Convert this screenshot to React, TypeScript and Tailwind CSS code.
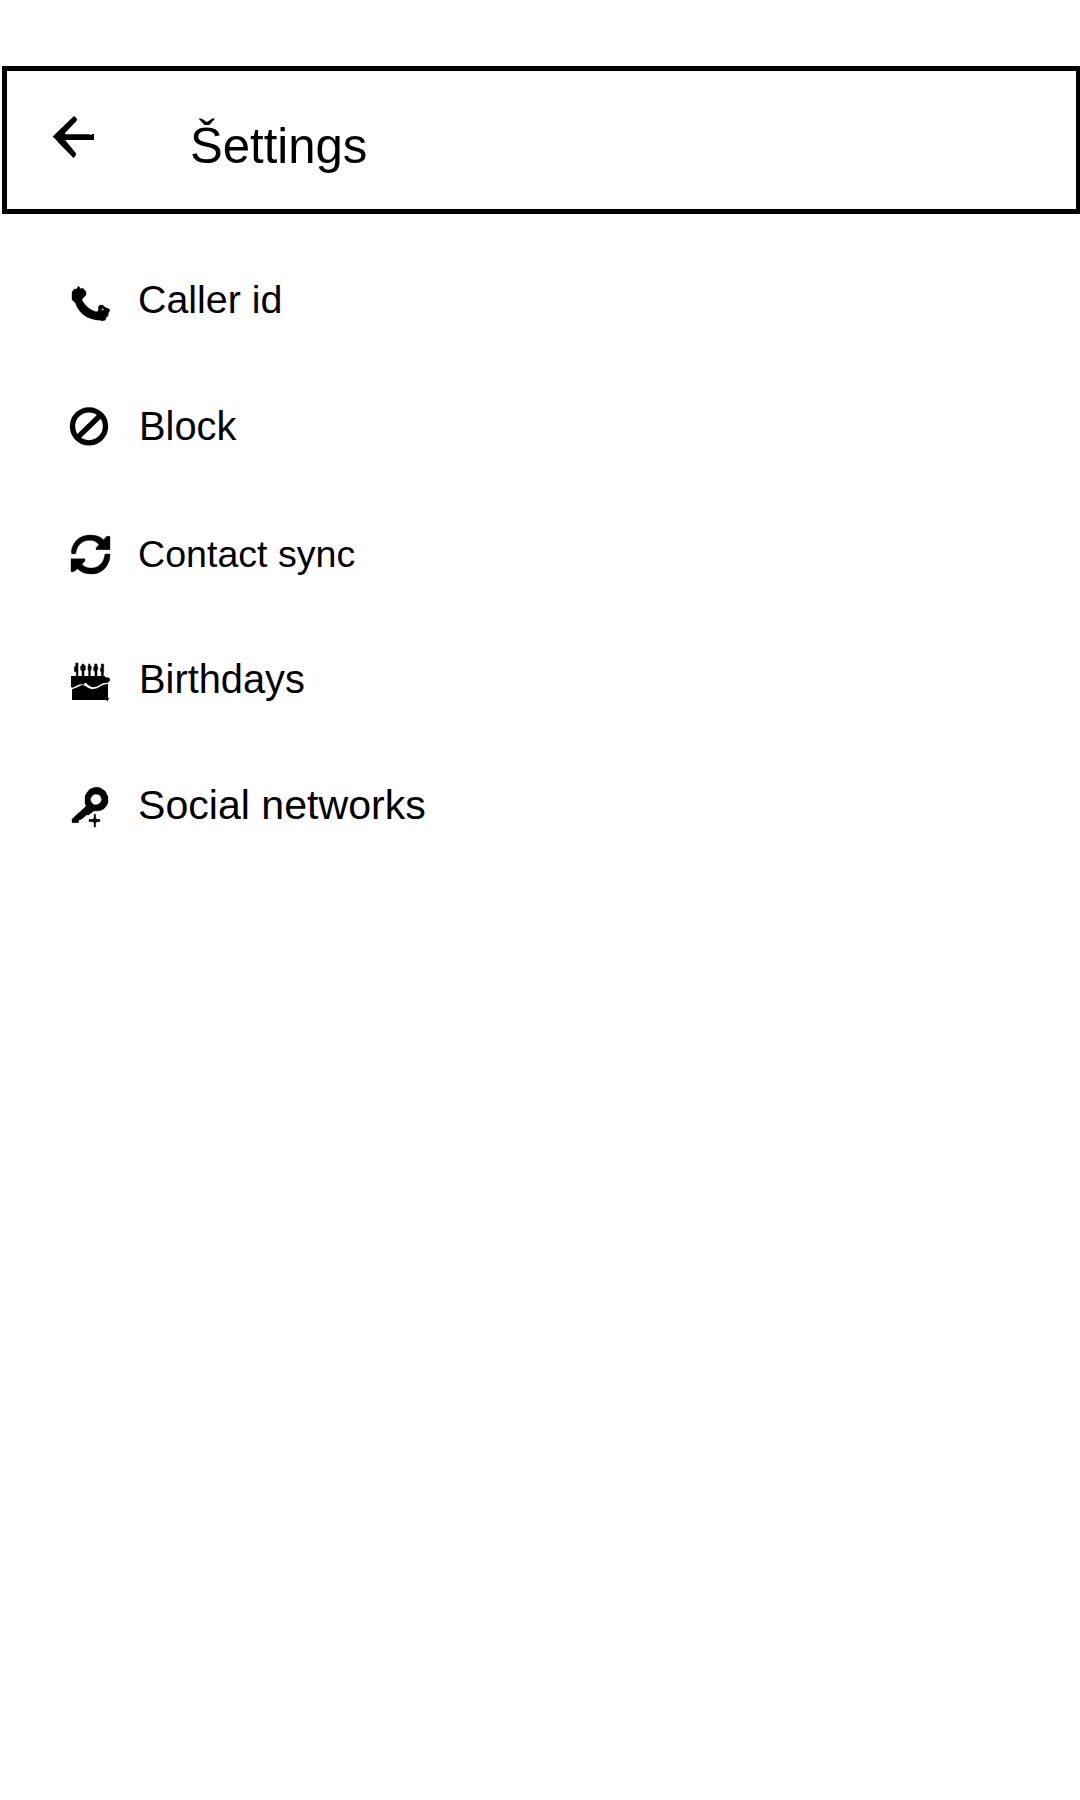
import type { ReactNode } from "react";

type Item = { label: string; row: string; text: string; iconTop: string; icon: ReactNode };

const items: Item[] = [
  {
    label: "Caller id",
    row: "h-[127px]",
    text: "ml-[18px] text-[39.4px] leading-[129px]",
    iconTop: "mt-[40px]",
    icon: (
      <path
        fillRule="evenodd"
        stroke="currentColor"
        strokeWidth="1"
        d="M55 33L62 41L69 40L78 50V60L66 73C66 78 72 86 79 93C88 102 100 109 109 110L115 108V95L120 90L129 91L134 96L149 103V108L145 114V121L137 130V135L126 138L121 136C103 135 84 130 70 119C60 111 50 98 47 85L36 74V51L42 43L51 41ZM125 101V106H131V101Z"
      />
    ),
  },
  {
    label: "Block",
    row: "h-[127px]",
    text: "ml-[19px] text-[39.8px] leading-[129px]",
    iconTop: "mt-[35px]",
    icon: (
      <g fill="none" stroke="currentColor">
        <circle cx="87" cy="88" r="49.5" strokeWidth="16" />
        <path d="M53 121L122 54" strokeWidth="16" />
      </g>
    ),
  },
  {
    label: "Contact sync",
    row: "h-[126px]",
    text: "ml-[18px] text-[37.6px] leading-[130px]",
    iconTop: "mt-[35px]",
    icon: (
      <g stroke="currentColor" strokeWidth="1">
        <path d="M35 90L34 82C37 55 58 33 90 33C109 33 122 38 131 47L140 37H150V77H108V71L117 62C109 53 101 49 89 49C68 49 52 63 49 82L47 89Z" />
        <path d="M150 90V99C147 127 125 150 97 150C79 150 64 146 53 134L41 143H33V104H75V110L66 121C74 130 84 133 96 132C116 130 130 117 133 98L135 90Z" />
      </g>
    ),
  },
  {
    label: "Birthdays",
    row: "h-[126px]",
    text: "ml-[19px] text-[39.8px] leading-[129px]",
    iconTop: "mt-[37px]",
    icon: (
      <>
        <path
          stroke="currentColor"
          strokeWidth="1.5"
          d="M47 33H54V72H49V61L43 58V44H47ZM66 36H71V39L76 41V53L72 58V72H66V58L62 53V42H66ZM86 36H90V41L94 43V50L91 58V72H86V58L84 53V42H86ZM104 36H111V42L114 47L111 57V72H105V59L101 55V46L104 42ZM124 36H131V60L130 63V72H124V60L121 57V49H124Z"
        />
        <path d="M33 72H135V75L147 77L150 81V86L143 92L129 94L110 104L96 106L84 99L78 93H73V98L65 97L56 98L38 107L33 105Z" />
        <path d="M36 112L48 107L66 99L75 101L86 108L96 112L111 109L128 99L144 95V137L148 139L145 143L142 148L138 144H36Z" />
      </>
    ),
  },
  {
    label: "Social networks",
    row: "h-[126px]",
    text: "ml-[18px] text-[41.1px] leading-[129px]",
    iconTop: "mt-[37px]",
    icon: (
      <g stroke="currentColor" strokeWidth="1">
        <path
          fillRule="evenodd"
          d="M105 28H116L125 32L136 40L140 49L144 56V73L140 83L132 92L120 98L101 99L86 111L79 111L66 123L56 127V134H36V124L48 112L75 88L78 83L75 76V54L80 45L89 34L98 30ZM103 49L95 55L91 64L94 73L102 80H112L121 74L125 65L122 55L114 49Z"
        />
        <path d="M102 109H107V121L111 124H120V131H111L107 135V147H102V135L98 131H87V124H98L102 121Z" />
      </g>
    ),
  },
];

export default function App() {
  return (
    <div className="flex h-[1800px] w-[1080px] flex-col bg-white pt-[66px] font-['Liberation_Sans',Arial,sans-serif] text-black">
      <header className="ml-[2px] flex h-[148px] border-[5px] border-r-4 border-black">
        <button aria-label="Back" className="ml-[33px] mt-[29px] size-[70px]">
          <svg viewBox="0 0 210 210" className="size-[70px]" fill="currentColor">
            <path d="M102 48L112 57L109 64L75 99L76 103H148L151 105L158 102H162V120H84L82 119L76 121L108 160L107 167L100 174L94 167L59 132L46 117L38 110L48 100Z" />
          </svg>
        </button>
        <h1 className="ml-[80px] h-[138px] text-[49.1px] leading-[150px] whitespace-nowrap">Šettings</h1>
      </header>
      <ul className="mt-[21px] flex flex-col">
        {items.map(({ label, row, text, iconTop, icon }) => (
          <li key={label} className={`flex pl-[60px] ${row}`}>
            <svg viewBox="0 0 180 180" fill="currentColor" className={`size-[60px] shrink-0 ${iconTop}`}>
              {icon}
            </svg>
            <span className={`whitespace-nowrap ${text}`}>{label}</span>
          </li>
        ))}
      </ul>
    </div>
  );
}
